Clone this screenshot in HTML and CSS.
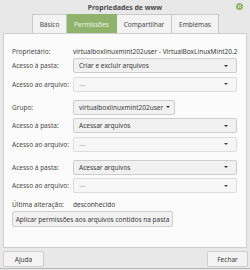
FILE: index.html
```html
<!DOCTYPE html>
<html lang="pt">
<head>
<meta charset="utf-8">
<title>Propriedades de www</title>
<link rel="stylesheet" href="styles.css">
</head>
<body>
<div class="window">
  <div class="titlebar">
    <span class="title">Propriedades de www</span>
    <span class="close"><svg width="7" height="7" viewBox="0 0 7 7"><circle cx="3.5" cy="3.5" r="3.5" fill="#8fb36b"/><path d="M2.2 2.2 L4.8 4.8 M4.8 2.2 L2.2 4.8" stroke="#fff" stroke-width="0.9"/></svg></span>
  </div>
  <div class="tabs">
    <div class="tab t1">Básico</div>
    <div class="tab t2 active">Permissões</div>
    <div class="tab t3">Compartilhar</div>
    <div class="tab t4">Emblemas</div>
  </div>
  <div class="frame">
    <div class="row owner"><span class="label">Proprietário:</span><span class="value">virtualboxlinuxmint202user - VirtualBoxLinuxMint20.2</span></div>
    <div class="group g1">
      <div class="row"><span class="label">Acesso à pasta:</span><div class="combo"><span>Criar e excluir arquivos</span><span class="arrow"></span></div></div>
      <div class="row"><span class="label">Acesso ao arquivo:</span><div class="combo disabled"><span>—</span><span class="arrow"></span></div></div>
    </div>
    <div class="group">
      <div class="row"><span class="label">Grupo:</span><div class="combo small"><span>virtualboxlinuxmint202user</span><span class="arrow"></span></div></div>
      <div class="row"><span class="label">Acesso à pasta:</span><div class="combo"><span>Acessar arquivos</span><span class="arrow"></span></div></div>
      <div class="row"><span class="label">Acesso ao arquivo:</span><div class="combo disabled"><span>—</span><span class="arrow"></span></div></div>
    </div>
    <div class="group">
      <div class="row"><span class="label">Acesso à pasta:</span><div class="combo"><span>Acessar arquivos</span><span class="arrow"></span></div></div>
      <div class="row"><span class="label">Acesso ao arquivo:</span><div class="combo disabled"><span>—</span><span class="arrow"></span></div></div>
    </div>
    <div class="row last"><span class="label">Última alteração:</span><span class="value">desconhecido</span></div>
    <div class="apply">Aplicar permissões aos arquivos contidos na pasta</div>
  </div>
  <div class="bottom">
    <div class="btn">Ajuda</div>
    <div class="btn">Fechar</div>
  </div>
</div>
</body>
</html>
```
FILE: styles.css
```css
* { box-sizing: border-box; }
html, body { margin: 0; padding: 0; }
body {
  width: 250px;
  height: 270px;
  background: #e8e8e8;
  font-family: "Noto Sans", "Open Sans", sans-serif;
  font-size: 6.5px;
  color: #3c3c3c;
  overflow: hidden;
}
.window {
  width: 250px;
  height: 269px;
  background: #e8e8e8;
  border-bottom: 1px solid #b8b8b8;
  display: flex;
  flex-direction: column;
}
.titlebar {
  height: 14px;
  position: relative;
  display: flex;
  align-items: center;
  justify-content: center;
}
.title {
  font-weight: bold;
  font-size: 6.8px;
  color: #4a4a4a;
}
.close {
  position: absolute;
  right: 7px;
  top: 2.5px;
  height: 7px;
  display: flex;
}
.tabs {
  display: flex;
  justify-content: center;
  height: 19px;
  margin-left: 1px;
}
.tab {
  height: 19px;
  border: 1px solid #c9c9c9;
  border-bottom: none;
  background: #f3f3f3;
  display: flex;
  align-items: center;
  justify-content: center;
  color: #4a4a4a;
}
.tab + .tab { border-left: none; }
.t1 { width: 35px; }
.t2 { width: 50px; }
.t3 { width: 55px; }
.t4 { width: 47px; }
.tab.active {
  background: #8fb36b;
  border-color: #8fb36b;
  color: #eef4e6;
}
.frame {
  margin: 0 3px;
  height: 215px;
  background: #fbfbfb;
  border: 1px solid #cfcfcf;
  padding: 10px 9px 0 8px;
  display: flex;
  flex-direction: column;
}
.row {
  display: flex;
  align-items: center;
  height: 15px;
}
.row.owner { height: 14px; }
.label {
  width: 61px;
  flex: none;
  color: #4a4a4a;
}
.value { white-space: nowrap; color: #3a3a3a; }
.group {
  display: flex;
  flex-direction: column;
  gap: 3.5px;
  margin-top: 8px;
}
.group.g1 { margin-top: 0; }
.combo {
  flex: 1;
  height: 15px;
  border: 1px solid #cdcdcd;
  border-radius: 2px;
  background: #f1f1f1;
  display: flex;
  align-items: center;
  justify-content: space-between;
  padding: 0 8px 0 5px;
  color: #3a3a3a;
}
.combo.small {
  flex: none;
  width: 102px;
  justify-content: flex-start;
  gap: 3px;
}
.combo.disabled { background: #f6f6f6; border-color: #dcdcdc; color: #b0b0b0; }
.arrow {
  width: 0; height: 0;
  border-left: 2.5px solid transparent;
  border-right: 2.5px solid transparent;
  border-top: 2.5px solid #333;
}
.combo.disabled .arrow { border-top-color: #444; }
.row.last { margin-top: 5px; height: 12px; }
.apply {
  margin-top: 1px;
  width: 161px;
  height: 16px;
  border: 1px solid #cdcdcd;
  border-radius: 2px;
  background: #f1f1f1;
  display: flex;
  align-items: center;
  justify-content: center;
  color: #3a3a3a;
}
.bottom {
  display: flex;
  justify-content: space-between;
  padding: 3px 2px 0 3px;
}
.btn {
  width: 41px;
  height: 16px;
  border: 1px solid #cdcdcd;
  border-radius: 2px;
  background: #f3f3f3;
  display: flex;
  align-items: center;
  justify-content: center;
  color: #3a3a3a;
}
```
